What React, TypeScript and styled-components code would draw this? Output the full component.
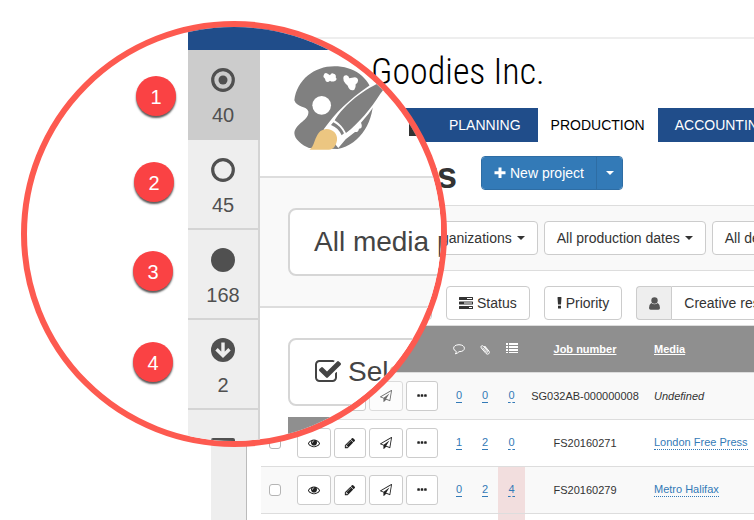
import React from "react";
import styled, { createGlobalStyle } from "styled-components";

const GlobalStyle = createGlobalStyle`
  *, *::before, *::after { box-sizing: border-box; }
  body { margin: 0; background: #fff; }
  body, button, input { font-family: "Liberation Sans", Arial, sans-serif; color: #333; }
`;

const Screen = styled.div`
  position: relative;
  height: 100vh;
  overflow: hidden;
  padding: 37px 0 0 211px;
  background: #fff;
`;

const Page = styled.div`
  display: flex;
  min-height: 100%;
`;

const Sidebar = styled.aside`
  flex: 0 0 36px;
  background: #eee;
  border-right: 1px solid #bbb;
`;

const Main = styled.main`
  flex: 1;
  min-width: 0;
  border-top: 2px solid #eee;
`;

const Brand = styled.div`
  padding: 9px 0 12px 124px;
  font: 300 36px/48px "Roboto Condensed", "Roboto", sans-serif;
  color: #000;
  white-space: nowrap;
`;

const Nav = styled.nav`
  display: flex;
  height: 34px;
  margin-left: 123px;
  overflow: hidden;
`;

const Tab = styled.a<{ $active?: boolean }>`
  flex: none;
  padding: 0 ${(p) => (p.$active ? 13 : 17)}px;
  font-size: 14px;
  line-height: 34px;
  text-decoration: none;
  color: ${(p) => (p.$active ? "#000" : "#fff")};
  background: ${(p) => (p.$active ? "#fff" : "#204d8a")};
`;

const HomeTab = styled(Tab)`
  width: 62px;
`;

const HeadingRow = styled.div`
  display: flex;
  gap: 24px;
  padding: 14px 0 9px;
`;

const Heading = styled.h1`
  flex: 0 0 210px;
  margin: 0;
  text-align: right;
  font-size: 36px;
  line-height: 40px;
  font-weight: 700;
`;

const SplitButton = styled.div`
  display: flex;
  height: 34px;
  border: 1px solid #2e6da4;
  border-radius: 4px;
  overflow: hidden;
`;

const PrimaryButton = styled.button`
  display: flex;
  align-items: center;
  gap: 4px;
  padding: 0 12px;
  border: 0;
  background: #337ab7;
  color: #fff;
  font-size: 14px;
  & + & { padding: 0 8px; border-left: 1px solid #2e6da4; }
`;

const Caret = styled.span`
  margin-left: 1px;
  border: 4px solid transparent;
  border-top-color: currentColor;
  border-bottom: 0;
`;

const FilterBar = styled.div`
  display: flex;
  gap: 6px;
  padding: 15px 0 15px 149px;
  border: solid #ddd;
  border-width: 1px 0;
  background: #f9f9f9;
  overflow: hidden;
`;

const ActionBar = styled.div`
  display: flex;
  gap: 14px;
  padding: 15px 0 5px 15px;
  overflow: hidden;
`;

const Button = styled.button`
  display: flex;
  flex: none;
  align-items: center;
  gap: 4px;
  height: 34px;
  padding: 0 12px;
  border: 1px solid #ccc;
  border-radius: 4px;
  background: #fff;
  font-size: 14px;
  white-space: nowrap;
`;

const WideButton = styled(Button)`
  width: 170px;
`;

const InputGroup = styled.div`
  display: flex;
  flex: none;
`;

const Addon = styled.span`
  display: grid;
  place-items: center;
  width: 35px;
  border: 1px solid #ccc;
  border-right: 0;
  border-radius: 4px 0 0 4px;
  background: #eee;
  color: #555;
`;

const GroupButton = styled(Button)`
  border-radius: 0 4px 4px 0;
`;

const Table = styled.table`
  width: calc(100% - 14px);
  margin-left: 14px;
  table-layout: fixed;
  border-collapse: collapse;
  font-size: 11px;
`;

const Col = styled.col<{ $w?: number }>`
  width: ${(p) => (p.$w ? `${p.$w}px` : "auto")};
`;

const HeadRow = styled.tr`
  height: 47px;
  border-top: 1px solid #ddd;
  background: #8f8f8f;
  color: #fff;
`;

const Row = styled.tr`
  height: 47px;
  border-top: 1px solid #ddd;
  background: #fff;
  &:nth-child(odd) { background: #f9f9f9; }
`;

const HeadCell = styled.th<{ $left?: boolean }>`
  padding: ${(p) => (p.$left ? "0 0 0 9px" : "0")};
  text-align: ${(p) => (p.$left ? "left" : "center")};
  line-height: 14px;
  svg { display: block; margin: 0 auto; }
`;

const SortLink = styled.a`
  color: #fff;
  text-decoration: underline;
`;

const Cell = styled.td<{ $left?: boolean; $alert?: boolean }>`
  padding: ${(p) => (p.$left ? "0 0 0 9px" : "0")};
  text-align: ${(p) => (p.$left ? "left" : "center")};
  background: ${(p) => (p.$alert ? "#f2dede" : "transparent")};
  white-space: nowrap;
`;

const Check = styled.input`
  appearance: none;
  display: block;
  width: 12px;
  height: 12px;
  margin: 0 0 0 8px;
  border: 1px solid #b5b5b5;
  border-radius: 3px;
  background: #fff;
`;

const Tools = styled.div`
  display: flex;
  gap: 3px;
`;

const Tool = styled.button<{ $narrow?: boolean }>`
  display: grid;
  place-items: center;
  width: ${(p) => (p.$narrow ? 32 : 34)}px;
  height: 30px;
  padding: 0;
  border: 1px solid #ccc;
  border-radius: 3px;
  background: #fff;
  color: #222;
  &:disabled { opacity: 0.65; }
`;

const DataLink = styled.a<{ $dotted?: boolean }>`
  display: inline-block;
  line-height: 13px;
  color: #337ab7;
  text-decoration: none;
  border-bottom: 1px ${(p) => (p.$dotted ? "dotted" : "dashed")} #337ab7;
`;

const Lens = styled.section`
  position: absolute;
  left: 21px;
  top: 21px;
  display: flex;
  width: 426px;
  height: 426px;
  padding-left: 161px;
  border: 6px solid #fd5a50;
  border-radius: 50%;
  background: #fff;
  overflow: hidden;
`;

const LensBody = styled.div`
  flex: none;
  width: 320px;
`;

const LensTop = styled.div`
  height: 23px;
  background: #204d8a;
`;

const LensColumns = styled.div`
  display: flex;
`;

const LensSidebar = styled.div`
  flex: none;
  width: 72px;
  min-width: 0;
  height: 400px;
  border-right: 2px solid #d4d4d4;
  background: #eee;
`;

const LensItem = styled.button<{ $active?: boolean }>`
  display: flex;
  flex-direction: column;
  align-items: center;
  gap: 8px;
  width: ${(p) => (p.$active ? 72 : 70)}px;
  height: 90px;
  padding: 18px ${(p) => (p.$active ? 2 : 0)}px 0 0;
  border: 0;
  border-bottom: 2px solid ${(p) => (p.$active ? "#ccc" : "#d4d4d4")};
  background: ${(p) => (p.$active ? "#ccc" : "#eee")};
  color: #505050;
  font-size: 20px;
  line-height: 30px;
`;

const LensMore = styled.div`
  width: 24px;
  height: 12px;
  margin: 28px auto 0;
  border-radius: 2px;
  background: #505050;
`;

const LensMain = styled.div`
  flex: 1;
  min-width: 0;
`;

const LensLogo = styled.div`
  display: flex;
  gap: 23px;
  height: 126px;
  padding: 15px 0 0 33px;
`;

const LensLabel = styled.div`
  width: 16px;
  height: 15px;
  margin-top: 56px;
  background: #333;
`;

const LensFilters = styled.div`
  padding: 30px 0 30px 28px;
  border: solid #ddd;
  border-width: 2px 0;
  background: #f9f9f9;
`;

const LensActions = styled.div`
  padding: 30px 0 11px 28px;
`;

const LensButton = styled.button`
  display: flex;
  align-items: center;
  gap: 6px;
  width: 240px;
  height: 68px;
  padding: 0 24px;
  border: 2px solid #d6d6d6;
  border-radius: 8px;
  background: #fff;
  color: #444;
  font-size: 28px;
  white-space: nowrap;
`;

const LensTableHead = styled.div`
  height: 40px;
  margin-left: 28px;
  background: #8f8f8f;
`;

const Marker = styled.span<{ $x: number; $y: number }>`
  position: absolute;
  left: ${(p) => p.$x}px;
  top: ${(p) => p.$y}px;
  width: 40px;
  height: 40px;
  border-radius: 50%;
  background: #fa4244;
  box-shadow: 0 2px 2px rgba(0, 0, 0, 0.65);
  color: #fff;
  font-size: 20px;
  line-height: 42px;
  text-align: center;
`;

const paths = {
  eye: "M1664 960q-152-236-381-353 61 104 61 225 0 185-131.5 316.5t-316.5 131.5-316.5-131.5-131.5-316.5q0-121 61-225-229 117-381 353 133 205 333.5 326.5t434.5 121.5 434.5-121.5 333.5-326.5zm-720-384q0-20-14-34t-34-14q-125 0-214.5 89.5t-89.5 214.5q0 20 14 34t34 14 34-14 14-34q0-86 61-147t147-61q20 0 34-14t14-34zm848 384q0 34-20 69-140 230-376.5 368.5t-499.5 138.5-499.5-139-376.5-368q-20-35-20-69t20-69q140-229 376.5-368t499.5-139 499.5 139 376.5 368q20 35 20 69z",
  pencil: "M491 1536l91-91-235-235-91 91v107h128v128h107zm523-928q0-22-22-22-10 0-17 7l-542 542q-7 7-7 17 0 22 22 22 10 0 17-7l542-542q7-7 7-17zm-54-192l416 416-832 832h-416v-416zm683 96q0 53-37 90l-166 166-416-416 166-165q36-38 90-38 53 0 91 38l235 234q37 39 37 91z",
  plane: "M1764 11q33 24 27 64l-256 1536q-5 29-32 45-14 8-31 8-11 0-24-5l-527-215-298 327q-18 21-47 21-14 0-23-4-19-7-30-23.500t-11-36.500v-452l-472-193q-37-14-40-55-3-39 32-59l1664-960q35-21 68 2zm-342 1499l221-1323-1434 827 336 137 863-639-478 797z",
  dots: "M576 736v192q0 40-28 68t-68 28h-192q-40 0-68-28t-28-68v-192q0-40 28-68t68-28h192q40 0 68 28t28 68zm512 0v192q0 40-28 68t-68 28h-192q-40 0-68-28t-28-68v-192q0-40 28-68t68-28h192q40 0 68 28t28 68zm512 0v192q0 40-28 68t-68 28h-192q-40 0-68-28t-28-68v-192q0-40 28-68t68-28h192q40 0 68 28t28 68z",
  check: "M1472 930v318q0 119-84.5 203.5t-203.500 84.5h-832q-119 0-203.500-84.5t-84.500-203.500v-832q0-119 84.500-203.500t203.500-84.500h832q63 0 117 25 15 7 18 23 3 17-9 29l-49 49q-10 10-23 10-3 0-9-2-23-6-45-6h-832q-66 0-113 47t-47 113v832q0 66 47 113t113 47h832q66 0 113-47t47-113v-254q0-13 9-22l64-64q10-10 23-10 6 0 12 3 20 8 20 29zm231-489l-814 814q-24 24-57 24t-57-24l-430-430q-24-24-24-57t24-57l110-110q24-24 57-24t57 24l263 263 647-647q24-24 57-24t57 24l110 110q24 24 24 57t-24 57z",
};

const Icon = ({ name, size }: { name: keyof typeof paths; size: number }) => (
  <svg width={size} height={size} viewBox="0 0 1792 1792" fill="currentColor" aria-hidden="true">
    <path d={paths[name]} />
  </svg>
);

const PlusIcon = () => (
  <svg width="12" height="12" viewBox="0 0 12 12" stroke="currentColor" strokeWidth="3" aria-hidden="true">
    <path d="M6 0.500V11M0.500 5.800H11.500" />
  </svg>
);

const StatusIcon = () => (
  <svg width="14" height="14" viewBox="0 0 14 14" aria-hidden="true">
    <path fill="currentColor" d="M.5 1h13q.5 0 .5.5v2q0 .5-.5.5H.5Q0 4 0 3.500v-2Q0 1 .5 1zm0 4.500h13q.5 0 .5.5v2q0 .5-.5.5H.5Q0 8.500 0 8V6q0-.5.5-.5zm0 4.500h13q.5 0 .5.5v2q0 .5-.5.5H.5Q0 13 0 12.500v-2q0-.5.5-.5z" />
    <path stroke="#fff" d="M8 2.500h5M5 7h8M10 11.500h3" />
  </svg>
);

const PriorityIcon = () => (
  <svg width="5" height="12" viewBox="0 0 5 12" fill="currentColor" aria-hidden="true">
    <path d="M.5.5Q.5 0 1 0h3q.5 0 .5.5L4 7.500H1zM1 8.700h3v2.800H1z" />
  </svg>
);

const UserIcon = () => (
  <svg width="11" height="13" viewBox="0 0 11 13" fill="currentColor" aria-hidden="true">
    <circle cx="5.500" cy="3.500" r="3.200" />
    <path d="M2.200 6Q5.500 8.500 8.800 6 11 7.300 11 11q0 1.700-1.700 1.700H1.700Q0 12.700 0 11 0 7.300 2.200 6z" />
  </svg>
);

const CommentIcon = () => (
  <svg width="12" height="12" viewBox="0 0 12 12" fill="none" stroke="#fff" aria-hidden="true">
    <path d="M3.300 8.500Q.6 7.300.6 5.200.8 2 6 1.700 11.200 2 11.400 5.200 11.200 8.600 6 8.700 4.500 10.500 2.300 10.800 3.300 9.800 3.300 8.500z" />
  </svg>
);

const ClipIcon = () => (
  <svg width="10" height="11" viewBox="0 0 10 11" fill="none" stroke="#fff" strokeLinecap="round" aria-hidden="true">
    <path d="M4.500 2.500L7.800 6.400M2.800 4L6.200 8Q7 8.700 7.500 8.200 8 7.700 7.400 7L3.300 2.200Q2.200 1.200 1.300 2 .5 2.900 1.300 4L6 9.500Q7.500 10.800 8.800 9.700 10 8.500 8.900 7L5 2.300" />
  </svg>
);

const ListIcon = () => (
  <svg width="12" height="12" viewBox="0 0 12 12" fill="#fff" aria-hidden="true">
    <path d="M0 0h2v2H0zM3 0h9v2H3zM0 3h2v2H0zM3 3h9v2H3zM0 6h2v2H0zM3 6h9v2H3zM0 9h2v1H0zM3 9h9v1H3z" />
  </svg>
);

const StateIcon = ({ kind }: { kind: string }) => (
  <svg width="24" height="24" viewBox="0 0 24 24" fill="none" stroke="currentColor" aria-hidden="true">
    {kind === "dot" && <circle cx="12" cy="12" r="4.500" fill="currentColor" stroke="none" />}
    {(kind === "dot" || kind === "ring") && <circle cx="12" cy="12" r="10.300" strokeWidth="3.200" />}
    {(kind === "full" || kind === "down") && <circle cx="12" cy="12" r="12" fill="currentColor" stroke="none" />}
    {kind === "down" && <path stroke="#eee" strokeWidth="3.400" d="M12 4.500V18M5.500 11.200L12 17.700 18.500 11.200" />}
  </svg>
);

const PaletteLogo = () => (
  <svg width="93" height="88" viewBox="338 164 279 264" role="img" aria-label="Paint palette">
    <path fill="#808080" d="M342 270C350 208 402 168 462 168c58 0 104 32 116 86 6 76-36 148-106 162l-86-3c-20-8-44-26-44-45 4-30 46-38 42-65-8-18-34-10-42-33z" />
    <g fill="#fff">
      <circle cx="424" cy="285" r="28" />
      <path d="M430 195q3-10 12-5l7 5q4-9 11-5 9 3 6 11 6 7-2 11-10 4-15-1-7 8-13 1-1-5-3-8-6-3-3-9zM489 204q0-10 10-9 6 1 8 9 8-1 17-3 10 2 9 11-1 7-7 10 1 10-4 16-11 5-17-5-2-9-9-13-8-7-7-16z" />
      <path d="M630 190L575 220C530 250 478 292 445 337L430 357q30 40 44 56l22-26 28-22q10 2 12-10 10 0 8-12l-2-6Q566 310 582 286L630 220z" />
    </g>
    <path fill="#808080" d="M640 200C566 224 496 276 463 330q22 14 34 38C536 338 572 294 600 250zM452 344q22 8 32 31l7-6q-10-22-32-33z" />
    <path fill="#ecc681" d="M387 418c20-10 14-58 50-62 20-1 36 15 33 34-3 18-12 28-24 28z" />
  </svg>
);

const rows = [
  { counts: [0, 0, 0], job: "SG032AB-000000008", media: "", locked: true, alert: false },
  { counts: [1, 2, 0], job: "FS20160271", media: "London Free Press", locked: false, alert: false },
  { counts: [0, 2, 4], job: "FS20160279", media: "Metro Halifax", locked: false, alert: true },
];

const states = [
  { kind: "dot", count: 40 },
  { kind: "ring", count: 45 },
  { kind: "full", count: 168 },
  { kind: "down", count: 2 },
];

const markers = [
  [136, 76],
  [134, 162],
  [133, 251],
  [133, 342],
];

export default function App() {
  return (
    <Screen>
      <GlobalStyle />
      <Page>
        <Sidebar />
        <Main>
          <Brand>Goodies Inc.</Brand>
          <Nav>
            <HomeTab href="#home" aria-label="Home" />
            <Tab href="#planning">PLANNING</Tab>
            <Tab href="#production" $active>PRODUCTION</Tab>
            <Tab href="#accounting">ACCOUNTING</Tab>
          </Nav>
          <HeadingRow>
            <Heading>Projects</Heading>
            <SplitButton>
              <PrimaryButton><PlusIcon />New project</PrimaryButton>
              <PrimaryButton aria-label="More project types"><Caret /></PrimaryButton>
            </SplitButton>
          </HeadingRow>
          <FilterBar>
            <Button>All organizations<Caret /></Button>
            <Button>All production dates<Caret /></Button>
            <Button>All deadlines<Caret /></Button>
          </FilterBar>
          <ActionBar>
            <WideButton aria-label="Selection" />
            <Button><StatusIcon />Status</Button>
            <Button><PriorityIcon />Priority</Button>
            <InputGroup>
              <Addon><UserIcon /></Addon>
              <GroupButton>Creative resource<Caret /></GroupButton>
            </InputGroup>
          </ActionBar>
          <Table>
            <colgroup>
              <Col $w={36} /><Col $w={149} /><Col $w={26} /><Col $w={26} /><Col $w={27} /><Col $w={120} /><Col />
            </colgroup>
            <thead>
              <HeadRow>
                <HeadCell aria-label="Selected" />
                <HeadCell aria-label="Tools" />
                <HeadCell aria-label="Comments"><CommentIcon /></HeadCell>
                <HeadCell aria-label="Attachments"><ClipIcon /></HeadCell>
                <HeadCell aria-label="Tasks"><ListIcon /></HeadCell>
                <HeadCell><SortLink href="#job">Job number</SortLink></HeadCell>
                <HeadCell $left><SortLink href="#media">Media</SortLink></HeadCell>
              </HeadRow>
            </thead>
            <tbody>
              {rows.map((r) => (
                <Row key={r.job}>
                  <Cell><Check type="checkbox" aria-label={`Select ${r.job}`} /></Cell>
                  <Cell>
                    <Tools>
                      <Tool aria-label="View"><Icon name="eye" size={12} /></Tool>
                      <Tool aria-label="Edit" $narrow><Icon name="pencil" size={12} /></Tool>
                      <Tool aria-label="Send" disabled={r.locked}><Icon name="plane" size={12} /></Tool>
                      <Tool aria-label="More" $narrow><Icon name="dots" size={12} /></Tool>
                    </Tools>
                  </Cell>
                  {r.counts.map((n, i) => (
                    <Cell key={i} $alert={r.alert && i === 2}><DataLink href="#count">{n}</DataLink></Cell>
                  ))}
                  <Cell>{r.job}</Cell>
                  <Cell $left>{r.media ? <DataLink $dotted href="#media">{r.media}</DataLink> : <em>Undefined</em>}</Cell>
                </Row>
              ))}
              <Row>
                <Cell colSpan={4} />
                <Cell $alert />
                <Cell colSpan={2} />
              </Row>
            </tbody>
          </Table>
        </Main>
      </Page>

      <Lens>
        <LensBody>
          <LensTop />
          <LensColumns>
            <LensSidebar>
              {states.map((s, i) => (
                <LensItem key={s.kind} $active={i === 0}><StateIcon kind={s.kind} />{s.count}</LensItem>
              ))}
              <LensMore />
            </LensSidebar>
            <LensMain>
              <LensLogo><PaletteLogo /><LensLabel /></LensLogo>
              <LensFilters><LensButton>All media p</LensButton></LensFilters>
              <LensActions><LensButton><Icon name="check" size={28} />Select</LensButton></LensActions>
              <LensTableHead />
            </LensMain>
          </LensColumns>
        </LensBody>
      </Lens>

      {markers.map(([x, y], i) => (
        <Marker key={i} $x={x} $y={y}>{i + 1}</Marker>
      ))}
    </Screen>
  );
}
